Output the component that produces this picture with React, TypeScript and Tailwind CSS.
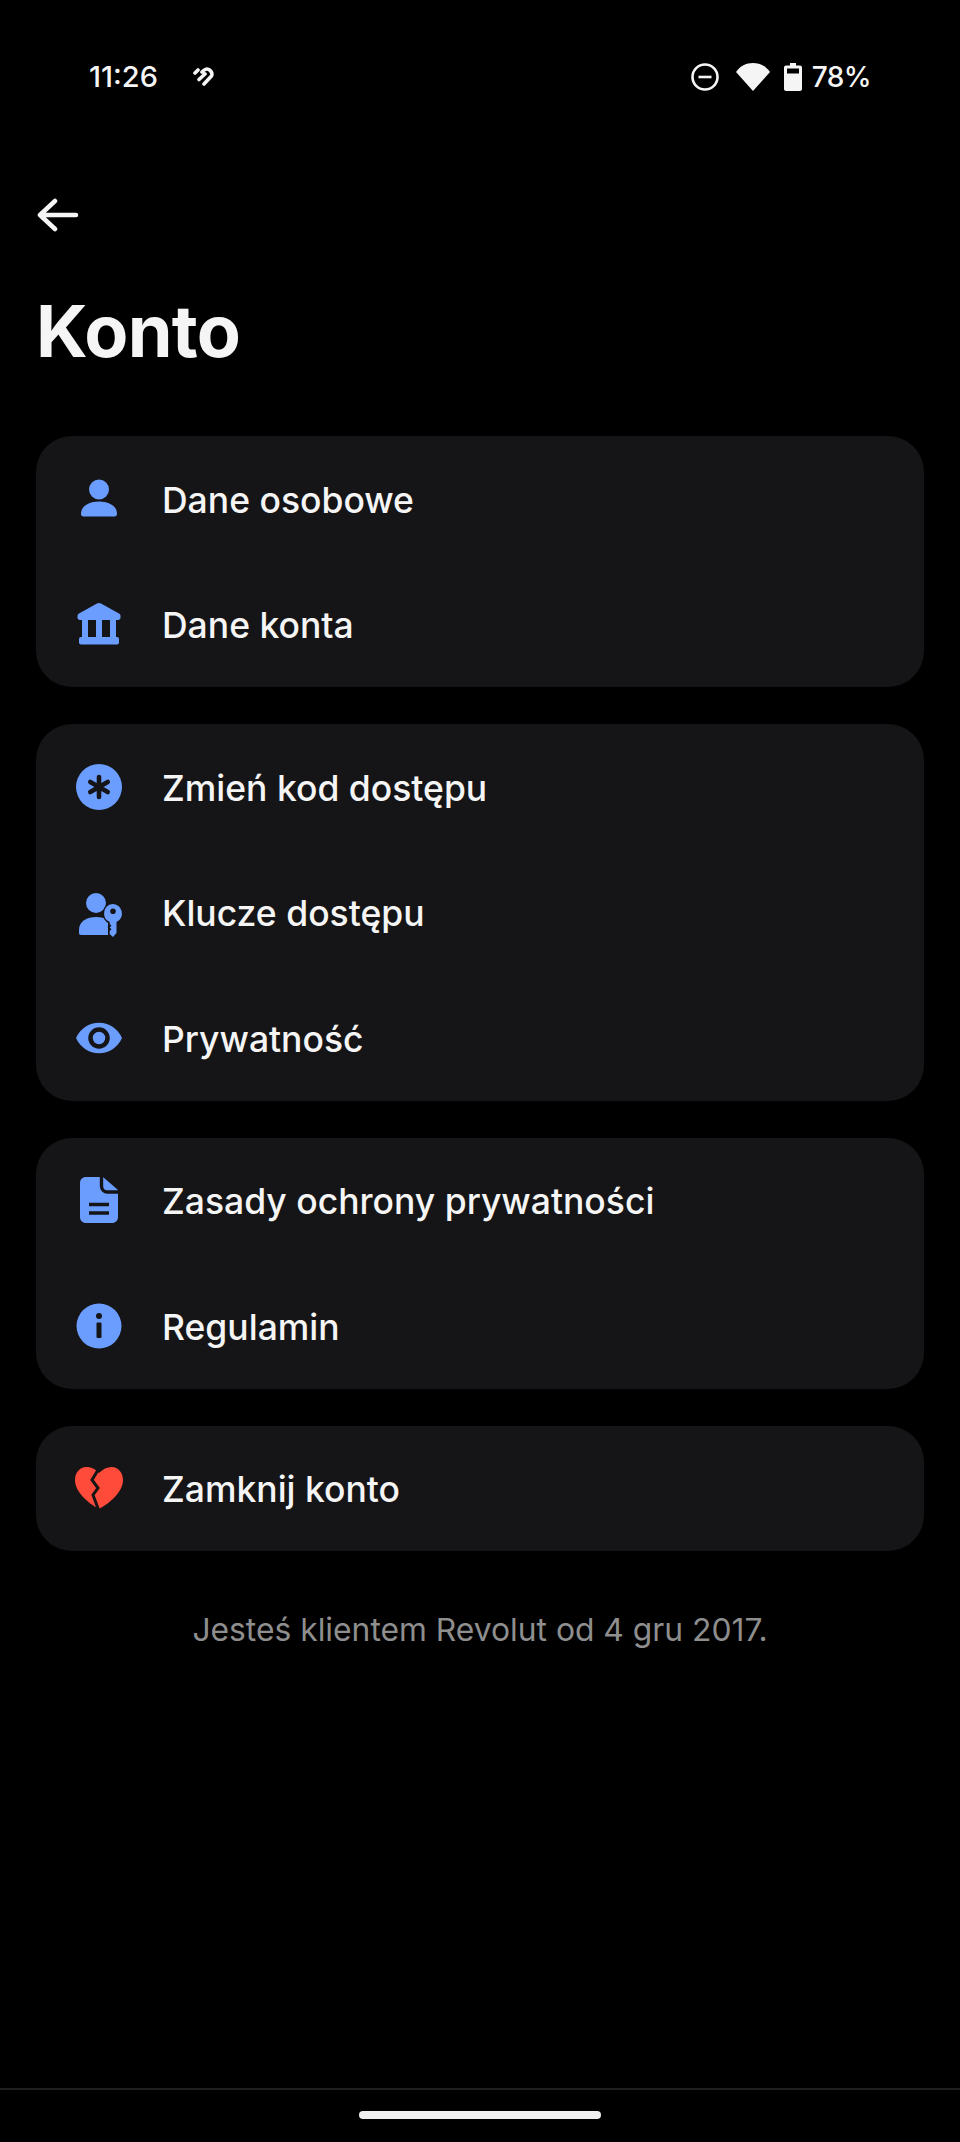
import type { ReactNode } from 'react';

const blue = '#6b9dff';
const panel = '#151517';

function PersonIcon() {
  return (
    <svg width="46" height="46" viewBox="0 0 46 46" fill={blue}>
      <circle cx="23" cy="13.500" r="10" />
      <path d="M5 38c0-8 8-12.500 18-12.500S41 30 41 38c0 1.500-1 2.500-2.500 2.500h-31C6 40.500 5 39.500 5 38z" />
    </svg>
  );
}

function BankIcon() {
  return (
    <svg width="46" height="46" viewBox="0 0 46 46" fill={blue}>
      <path d="M21 2.500c1.300-.7 2.700-.7 4 0l18 10c1 .6 1.500 1.400 1.500 2.500v1.500c0 1.400-1 2.500-2.500 2.500H4c-1.500 0-2.500-1.100-2.500-2.500V15c0-1.100.5-1.900 1.500-2.500z" />
      <path d="M6 19h6v18H6zM20 19h6v18h-6zM34 19h6v18h-6z" />
      <rect x="3" y="36" width="40" height="7.500" rx="2" />
    </svg>
  );
}

function AsteriskIcon() {
  return (
    <svg width="46" height="46" viewBox="0 0 46 46">
      <circle cx="23" cy="23" r="23" fill={blue} />
      <path d="M23 13v20M14.300 18l17.400 10M31.700 18l-17.400 10" stroke={panel} strokeWidth="4.600" strokeLinecap="round" />
    </svg>
  );
}

function PasskeyIcon() {
  return (
    <svg className="overflow-visible" width="46" height="46" viewBox="0 0 46 46">
      <circle cx="20" cy="14" r="10" fill={blue} />
      <path d="M3 41c0-9 8-13 17-13 5 0 9 1 12 3v15H5c-1.300 0-2-.8-2-2z" fill={blue} />
      <path
        fillRule="evenodd"
        d="M36.500 15a9.500 9.500 0 0 1 4 18.100V44l-3.500 4-3.300-3v-3l1.800-1.800-1.800-1.700 1.800-1.800-1.800-1.700v-1.900A9.500 9.500 0 0 1 36.500 15zm.5 4.500a2.800 2.800 0 1 0 0 5.600 2.800 2.800 0 0 0 0-5.600z"
        fill={blue}
        stroke={panel}
        strokeWidth="3"
        paintOrder="stroke"
      />
    </svg>
  );
}

function EyeIcon() {
  return (
    <svg width="46" height="46" viewBox="0 0 46 46">
      <path d="M0 23C4.500 13.500 13 7.800 23 7.800S41.500 13.500 46 23c-4.500 9.500-13 15.200-23 15.200S4.500 32.500 0 23z" fill={blue} />
      <circle cx="23" cy="23" r="8.500" fill="none" stroke={panel} strokeWidth="4.500" />
    </svg>
  );
}

function DocIcon() {
  return (
    <svg width="46" height="46" viewBox="0 0 46 46">
      <path d="M10 0h17l15 13v27c0 3.500-2.500 6-6 6H10c-3.500 0-6-2.500-6-6V6c0-3.500 2.500-6 6-6z" fill={blue} />
      <path d="M25.500 0v9c0 3.500 2.500 6 6 6H43" fill="none" stroke={panel} strokeWidth="3.400" />
      <path d="M13 27.500h20M13 36h20" stroke={panel} strokeWidth="3.400" />
    </svg>
  );
}

function InfoIcon() {
  return (
    <svg width="46" height="46" viewBox="0 0 46 46">
      <circle cx="23" cy="23" r="22.500" fill={blue} />
      <circle cx="23" cy="13" r="3" fill={panel} />
      <rect x="20.500" y="19.500" width="5" height="15.500" rx="1" fill={panel} />
    </svg>
  );
}

function BrokenHeartIcon() {
  return (
    <svg width="50" height="46" viewBox="0 0 50 46">
      <path d="M25 8C21 3.500 16 2 12.500 2 5.500 2 1 8 1 15c0 12 13 23 24 29 11-6 24-17 24-29 0-7-4.500-13-11.500-13C33 2 29 4 25 8z" fill="#ff4b3a" />
      <path d="M24 5l-6 10 6 8-5 7 6 16" fill="none" stroke={panel} strokeWidth="3" />
    </svg>
  );
}

const groups: { icon: ReactNode; label: string }[][] = [
  [
    { icon: <PersonIcon />, label: 'Dane osobowe' },
    { icon: <BankIcon />, label: 'Dane konta' },
  ],
  [
    { icon: <AsteriskIcon />, label: 'Zmień kod dostępu' },
    { icon: <PasskeyIcon />, label: 'Klucze dostępu' },
    { icon: <EyeIcon />, label: 'Prywatność' },
  ],
  [
    { icon: <DocIcon />, label: 'Zasady ochrony prywatności' },
    { icon: <InfoIcon />, label: 'Regulamin' },
  ],
  [{ icon: <BrokenHeartIcon />, label: 'Zamknij konto' }],
];

function StatusBar() {
  return (
    <div className="flex h-[98px] items-end justify-between pl-[89px] pr-[89px] text-[#f5f5f5]">
      <div className="flex items-center gap-[34px] text-[29px] font-medium">
        <span>11:26</span>
        <svg width="22" height="20" viewBox="0 0 22 20" fill="none" stroke="#f5f5f5" strokeWidth="3.600" strokeLinecap="round">
          <path d="M12 18l7.500-8C21 7 18 3 15 3c-2 0-3 1-5 3M7 13.500L13 8M3 7l3-3" />
        </svg>
      </div>
      <div className="flex items-center text-[28px]">
        <svg width="28" height="28" viewBox="0 0 28 28" fill="none" stroke="#f5f5f5" strokeWidth="2.600">
          <circle cx="14" cy="14" r="12.500" />
          <path d="M7.500 14h13" />
        </svg>
        <svg className="ml-[17px]" width="34" height="28" viewBox="0 0 34 28" fill="#f5f5f5">
          <path d="M17 28L0 9C4 3 10 0 17 0s13 3 17 9z" />
        </svg>
        <svg className="ml-[14px]" width="18" height="28" viewBox="0 0 18 28" fill="#f5f5f5">
          <path fillRule="evenodd" d="M6 0h6v2.500h4c1 0 2 .8 2 2V26c0 1.200-1 2-2 2H2c-1 0-2-.8-2-2V4.500c0-1.200 1-2 2-2h4zM3 5.500v5h12v-5z" />
        </svg>
        <span className="ml-[10px] font-medium tracking-[-0.02em]">78%</span>
      </div>
    </div>
  );
}

export default function App() {
  return (
    <div className="flex h-[2142px] w-[960px] flex-col overflow-hidden bg-black font-['Inter',sans-serif]">
      <StatusBar />

      <header className="px-9">
        <svg className="ml-[1px] mt-[100px] block" width="42" height="34" viewBox="0 0 42 34" fill="none" stroke="#f5f5f5" strokeWidth="4.500" strokeLinecap="round" strokeLinejoin="round">
          <path d="M3 17h36M18 3L3 17l15 14" />
        </svg>
        <h1 className="mt-[55px] text-[72px] font-bold leading-[88px] tracking-[-0.01em] text-[#f5f5f5]">Konto</h1>
      </header>

      <main className="mt-[61px] flex flex-col gap-[37px] px-9">
        {groups.map((rows, i) => (
          <section key={i} className="rounded-[36px] bg-[#151517]">
            {rows.map((row) => (
              <div key={row.label} className="flex h-[125.500px] items-center">
                <span className="flex w-[126px] shrink-0 justify-center">{row.icon}</span>
                <span className="pt-[3px] text-[35.500px] font-[450] text-[#f5f5f5]">{row.label}</span>
              </div>
            ))}
          </section>
        ))}
      </main>

      <p className="mt-[57px] text-center text-[31.800px] leading-[44px] text-[#8e8e8e]">Jesteś klientem Revolut od 4 gru 2017.</p>

      <footer className="mt-auto">
        <div className="h-[2px] bg-[#1f1f1f]" />
        <div className="mx-auto mb-[23px] mt-[21px] h-[8px] w-[242px] rounded-full bg-[#f0f0f0]" />
      </footer>
    </div>
  );
}
